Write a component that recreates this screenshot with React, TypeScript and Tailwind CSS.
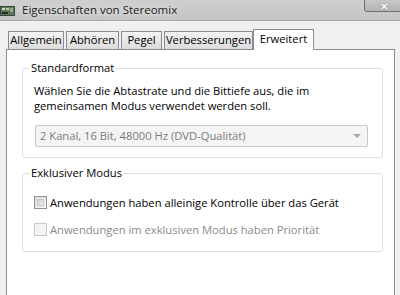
import React from "react";

const font = { fontFamily: '"Open Sans", "Noto Sans", sans-serif' };

function Tab({ label, w, active }: { label: string; w: string; active?: boolean }) {
  if (active) {
    return (
      <div
        className={`${w} h-[21px] -ml-[2px] -mb-px relative z-10 bg-white border border-[#898c95] border-b-0 flex items-center justify-center text-[11.2px] pb-[1px] text-black`}
      >
        {label}
      </div>
    );
  }
  return (
    <div
      className={`${w} h-[18px] mr-[2px] bg-gradient-to-b from-[#f3f3f3] to-[#dcdcdc] border border-[#898c95] border-b-0 flex items-center justify-center text-[11.2px] text-black`}
    >
      {label}
    </div>
  );
}

function GroupBox({ title, children, className }: { title: string; children: React.ReactNode; className?: string }) {
  return (
    <div className={`relative border border-[#d5dfe5] rounded-[3px] ${className ?? ""}`}>
      <div className="absolute -top-[9px] left-[6px] bg-white px-[2px] text-[11.2px] leading-[16px] text-black">{title}</div>
      {children}
    </div>
  );
}

export default function App() {
  return (
    <div className="w-[400px] h-[295px] overflow-hidden bg-[#f0f0f0] flex flex-col" style={font}>
      {/* title bar */}
      <div className="h-[21px] relative flex items-center bg-gradient-to-b from-[#cfcfcf] to-[#c4c4c4] border-b border-[#a8a8a8]">
        <svg width="16" height="12" viewBox="0 0 16 12" className="mt-[1px]">
          <rect x="0" y="1" width="15" height="10" fill="#3a4a3a" />
          <rect x="1" y="2" width="13" height="8" fill="#5c7a5c" />
          <rect x="2" y="3" width="3" height="2" fill="#d0d8c8" />
          <rect x="6" y="3" width="3" height="2" fill="#c8c8a0" />
          <rect x="10" y="3" width="3" height="4" fill="#9aa890" />
          <rect x="2" y="7" width="6" height="2" fill="#2a2a2a" />
        </svg>
        <span
          className="ml-[6px] text-[11.5px] leading-[20px] text-[#1a1a1a]"
          style={{ textShadow: "0 0 6px #e8e8e8, 0 0 6px #e8e8e8" }}
        >
          Eigenschaften von Stereomix
        </span>
        <div className="absolute right-[-4px] top-[-2px] w-[40px] h-[14px] rounded-[3px] border border-[#6f6f6f] bg-gradient-to-b from-[#c9c9c9] to-[#b4b4b4] flex items-center justify-center">
          <span className="text-[10px] leading-[10px] text-white font-bold mt-[1px]" style={{ textShadow: "0 0 1px #555" }}>✕</span>
        </div>
      </div>
      {/* body */}
      <div className="flex-1 pl-[6px] pt-[7px] flex flex-col">
        <div className="flex items-end pl-[2px] h-[21px]">
          <Tab label="Allgemein" w="w-[56px]" />
          <Tab label="Abhören" w="w-[53px]" />
          <Tab label="Pegel" w="w-[41px]" />
          <Tab label="Verbesserungen" w="w-[89px]" />
          <Tab label="Erweitert" w="w-[61px]" active />
        </div>
        <div className="w-[389px] flex-1 bg-white border border-[#898c95] border-b-0 pt-[18px] pl-[15px]">
          <GroupBox title="Standardformat" className="w-[361px] h-[90px]">
            <div className="pt-[14px] pl-[11px] text-[11.2px] leading-[15px] text-black">
              Wählen Sie die Abtastrate und die Bittiefe aus, die im
              <br />
              gemeinsamen Modus verwendet werden soll.
            </div>
            <div className="mt-[12px] ml-[12px] w-[333px] h-[22px] rounded-[2px] border border-[#c8c8c8] bg-[#f4f4f4] flex items-center justify-between pl-[4px] pr-[6px]">
              <span className="text-[11.2px] text-[#7a7a7a]">2 Kanal, 16 Bit, 48000 Hz (DVD-Qualität)</span>
              <svg width="8" height="4" viewBox="0 0 8 4">
                <path d="M0 0 L8 0 L4 4 Z" fill="#a8a8a8" />
              </svg>
            </div>
          </GroupBox>
          <GroupBox title="Exklusiver Modus" className="w-[361px] h-[79px] mt-[15px]">
            <div className="pt-[21px] pl-[11px] flex flex-col gap-[12px]">
              <div className="flex items-center gap-[3px]">
                <div className="w-[13px] h-[13px] border border-[#8e8f8f] bg-gradient-to-br from-[#dcdcdc] to-[#f8f8f8] p-[2px]">
                  <div className="w-full h-full border border-[#c8c8c8] bg-gradient-to-br from-[#cfcfcf] to-[#f2f2f2]" />
                </div>
                <span className="text-[11.2px] leading-[15px] text-black">Anwendungen haben alleinige Kontrolle über das Gerät</span>
              </div>
              <div className="flex items-center gap-[3px]">
                <div className="w-[13px] h-[13px] border border-[#c9c9c9] bg-[#f4f4f4]" />
                <span className="text-[11.2px] leading-[15px] text-[#8a8a8a]">Anwendungen im exklusiven Modus haben Priorität</span>
              </div>
            </div>
          </GroupBox>
        </div>
      </div>
    </div>
  );
}
